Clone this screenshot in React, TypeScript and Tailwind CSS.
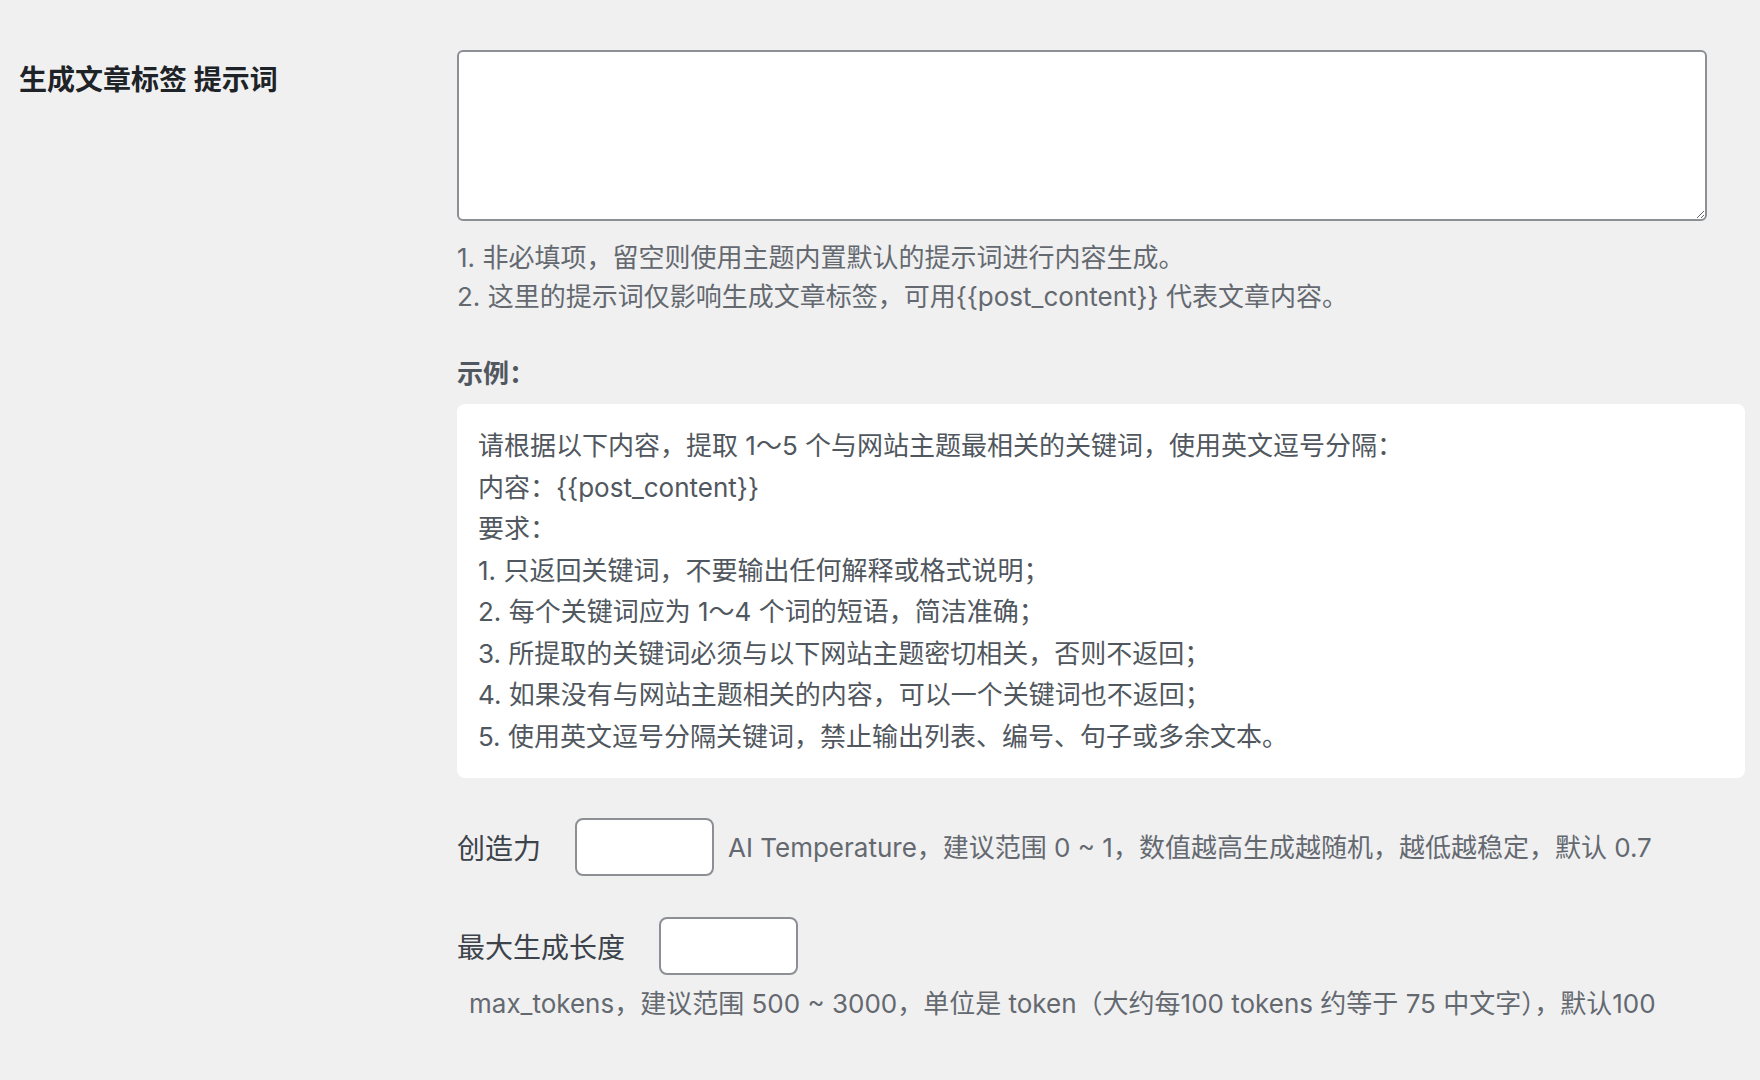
import React from 'react';

const exampleLines = [
  '请根据以下内容，提取 1～5 个与网站主题最相关的关键词，使用英文逗号分隔：',
  '内容：{{post_content}}',
  '要求：',
  '1. 只返回关键词，不要输出任何解释或格式说明；',
  '2. 每个关键词应为 1～4 个词的短语，简洁准确；',
  '3. 所提取的关键词必须与以下网站主题密切相关，否则不返回；',
  '4. 如果没有与网站主题相关的内容，可以一个关键词也不返回；',
  '5. 使用英文逗号分隔关键词，禁止输出列表、编号、句子或多余文本。',
];

export default function App() {
  return (
    <div className="min-h-screen bg-[#f0f0f1] font-['Inter','Noto_Sans_CJK_SC',sans-serif]">
      <div className="flex pt-[50px]">
        {/* row heading */}
        <div className="w-[457px] shrink-0 pl-[19px] pt-[9px]">
          <h2 className="text-[28px] leading-[42px] font-bold text-[#1d2327]">生成文章标签 提示词</h2>
        </div>

        {/* field column */}
        <div className="flex-1 pr-[15px]">
          <textarea
            className="block w-[1250px] h-[171px] bg-white border-2 border-[#8c8f94] rounded-[6px] outline-none"
            defaultValue=""
          />

          <div className="mt-[17px] text-[26px] leading-[39px] text-[#646970]">
            <p>1. 非必填项，留空则使用主题内置默认的提示词进行内容生成。</p>
            <p>2. 这里的提示词仅影响生成文章标签，可用{'{{post_content}}'} 代表文章内容。</p>
          </div>

          <p className="mt-[38px] text-[26px] leading-[39px] font-bold text-[#50575e]">示例：</p>

          <div className="mt-[11px] bg-white rounded-[8px] px-[21px] py-[21px] text-[26px] leading-[41.5px] text-[#50575e]">
            {exampleLines.map((line) => (
              <p key={line}>{line}</p>
            ))}
          </div>

          <div className="mt-[40px] flex items-center">
            <label className="mt-[3px] text-[28px] leading-[42px] text-[#3c434a]">创造力</label>
            <input
              type="text"
              className="ml-[34px] w-[139px] h-[58px] bg-white border-2 border-[#8c8f94] rounded-[8px] outline-none"
            />
            <span className="ml-[14px] text-[26px] leading-[39px] text-[#646970]">
              AI Temperature，建议范围 0 ~ 1，数值越高生成越随机，越低越稳定，默认 0.7
            </span>
          </div>

          <div className="mt-[41px] flex items-center">
            <label className="mt-[3px] text-[28px] leading-[42px] text-[#3c434a]">最大生成长度</label>
            <input
              type="text"
              className="ml-[34px] w-[139px] h-[58px] bg-white border-2 border-[#8c8f94] rounded-[8px] outline-none"
            />
          </div>

          <p className="mt-[9px] pl-[12px] text-[26px] leading-[39px] text-[#646970]">
            max_tokens，建议范围 500 ~ 3000，单位是 token（大约每100 tokens 约等于 75 中文字），默认100
          </p>
        </div>
      </div>
    </div>
  );
}
